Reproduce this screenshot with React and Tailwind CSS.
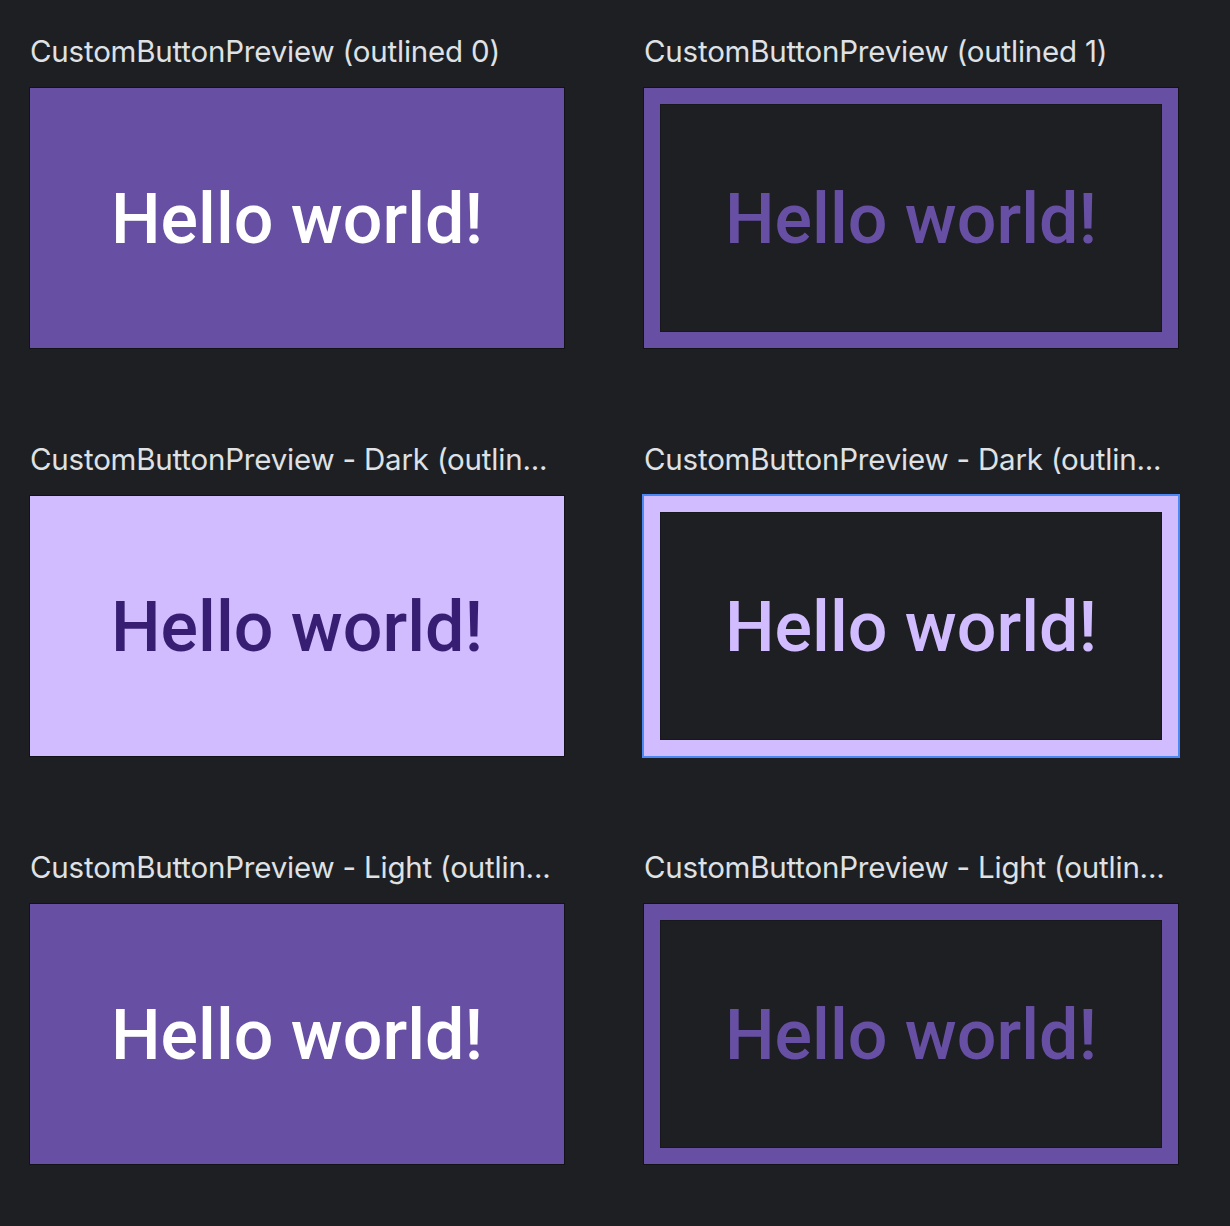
export default function App() {
  const rows = [
    { left: "CustomButtonPreview (outlined 0)", right: "CustomButtonPreview (outlined 1)", theme: "light" },
    { left: "CustomButtonPreview - Dark (outlin...", right: "CustomButtonPreview - Dark (outlin...", theme: "dark" },
    { left: "CustomButtonPreview - Light (outlin...", right: "CustomButtonPreview - Light (outlin...", theme: "light" },
  ];
  const titleCls =
    "h-[34px] leading-[34px] text-[29.5px] text-[#dfe1e5] whitespace-nowrap tracking-[-0.2px]";
  const hello = "text-[70px] font-medium leading-none whitespace-nowrap mt-[2px]";
  const font = { fontFamily: "Roboto, 'Noto Sans', sans-serif" };
  return (
    <div
      className="min-h-[1226px] w-[1230px] bg-[#1e1f22] pl-[30px] pt-[34px]"
      style={{ fontFamily: "Inter, 'Noto Sans', sans-serif" }}
    >
      <div className="grid grid-cols-[534px_534px] gap-x-[80px] gap-y-[94px]">
        {rows.map((r, i) => [
          <div key={"l" + i} className="flex flex-col gap-[20px]">
            <div className={titleCls}>{r.left}</div>
            <div
              className={
                "h-[260px] w-[534px] flex items-center justify-center ring-1 ring-[#121316] " +
                (r.theme === "dark" ? "bg-[#d0bcff]" : "bg-[#6750a4]")
              }
            >
              <span
                className={hello + (r.theme === "dark" ? " text-[#381e72]" : " text-white")}
                style={font}
              >
                Hello world!
              </span>
            </div>
          </div>,
          <div key={"r" + i} className="flex flex-col gap-[20px]">
            <div className={titleCls}>{r.right}</div>
            <div
              className={
                "h-[260px] w-[534px] p-[16px] " +
                (r.theme === "dark"
                  ? "bg-[#d0bcff] ring-2 ring-[#4a88f5]"
                  : "bg-[#6750a4] ring-1 ring-[#121316]")
              }
            >
              <div className="h-full w-full bg-[#1e1f22] border border-[#17181b] flex items-center justify-center">
                <span
                  className={hello + (r.theme === "dark" ? " text-[#d0bcff]" : " text-[#6750a4]")}
                  style={font}
                >
                  Hello world!
                </span>
              </div>
            </div>
          </div>,
        ])}
      </div>
    </div>
  );
}
